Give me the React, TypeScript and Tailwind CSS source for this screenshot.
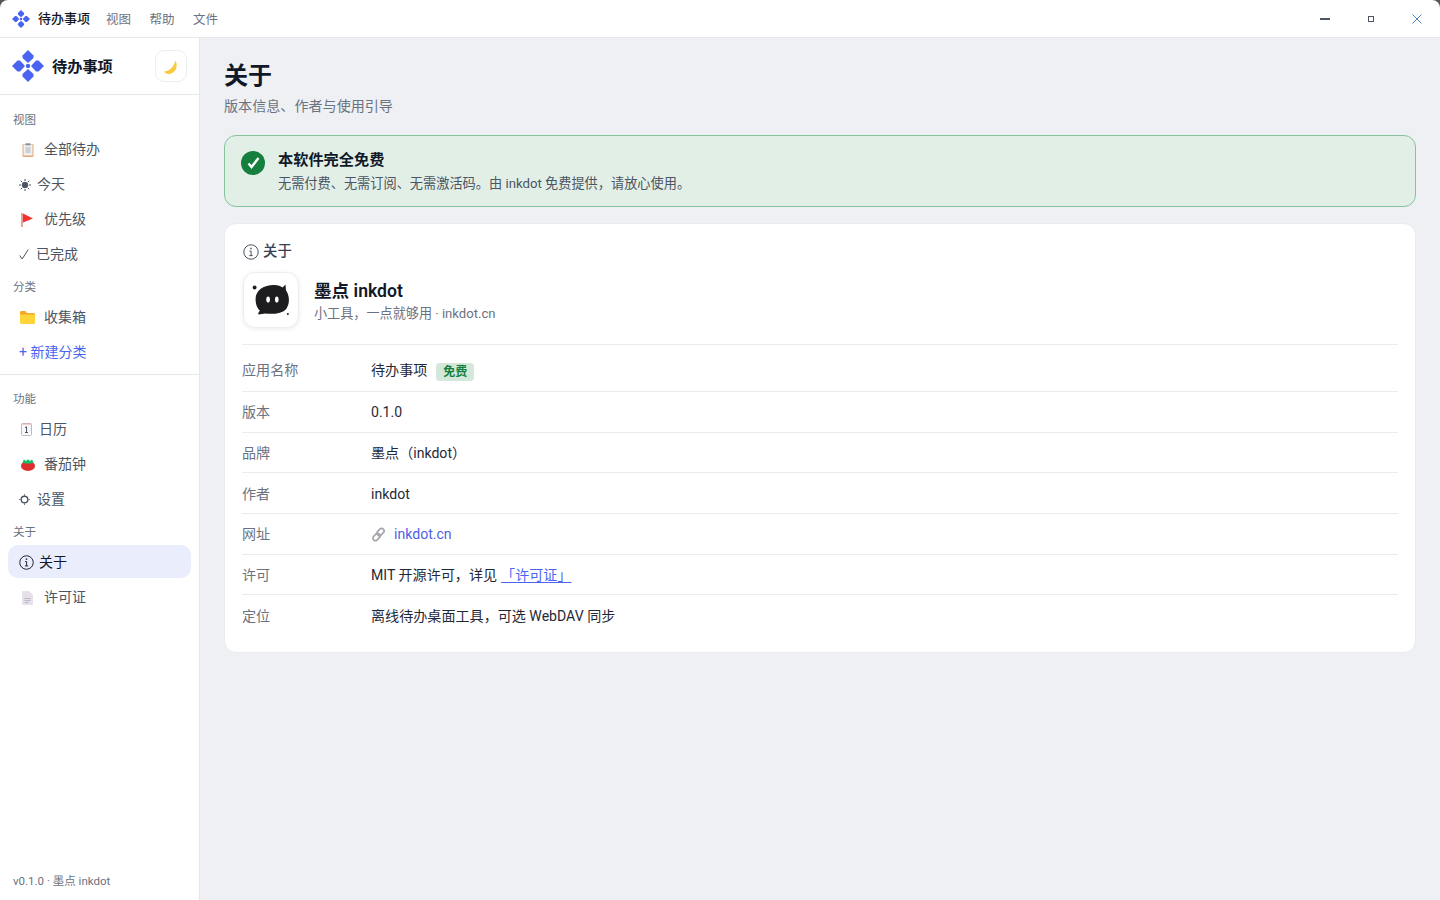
import type { ReactNode } from "react";

const FONT = "font-['Roboto','Noto_Sans_CJK_SC',sans-serif]";

const Logo = ({ size }: { size: number }) => (
  <svg width={size} height={size} viewBox="0 0 32 32" fill="#4a63f0">
    <path d="M16 0l5.500 5.500V8L16 13l-5.500-5V5.500z" />
    <path d="M16 32l5.500-5.500V24L16 19l-5.500 5v2.500z" />
    <path d="M0 16l5.500-5.500H8l5 5.500-5 5.500H5.500z" />
    <path d="M32 16l-5.500-5.500H24l-5 5.500 5 5.500h2.500z" />
    <circle cx="16" cy="16" r="2.200" />
  </svg>
);

const MoonIcon = () => (
  <svg width="16" height="16" viewBox="0 0 16 16" className="mt-[2px]">
    <path d="M12.500 1.500C16 8 11.500 15 5.500 15 3.500 15 2 14 1 12.500 6 12.500 10.500 8.500 12.500 1.500z" fill="#fbc93d" />
  </svg>
);

const ClipboardIcon = () => (
  <svg width="12" height="14" viewBox="0 0 12 14">
    <rect x=".5" y="1" width="11" height="13" rx="1" fill="#e3a878" />
    <rect x="1.500" y="1.500" width="9" height="11" fill="#eef0f2" />
    <rect x="3.500" y=".3" width="5" height="2" fill="#8a8f98" />
    <path d="M3.500 5h5M3.500 7h5M3.500 9h5" stroke="#a9adb5" />
  </svg>
);

const SunIcon = () => (
  <svg width="12" height="12" viewBox="0 0 12 12" stroke="#4b5563" fill="#4b5563" className="shrink-0">
    <circle cx="6" cy="6" r="2.800" />
    <path d="M6 0v2M6 10v2M0 6h2M10 6h2M1.800 1.800l1.400 1.400M8.800 8.800l1.400 1.400M1.800 10.200l1.400-1.400M8.800 3.200l1.400-1.400" fill="none" />
  </svg>
);

const CheckIcon = () => (
  <svg width="10" height="11" viewBox="0 0 10 11" fill="none" stroke="#4b5563" className="shrink-0">
    <path d="M.8 6.500L3.200 10 9.200.5" />
  </svg>
);

const FlagIcon = () => (
  <svg width="13" height="14" viewBox="0 0 13 14">
    <rect x="0" y="0" width="2" height="14" fill="#e8a197" />
    <path d="M2 .5L12 5.500 2 9.500z" fill="#f4312d" />
  </svg>
);

const FolderIcon = () => (
  <svg width="15" height="13" viewBox="0 0 15 13">
    <path d="M0 1.500C0 .7.700 0 1.500 0h3.800l1.500 2H13.500c.8 0 1.500.7 1.500 1.500V4H0z" fill="#f5a623" />
    <path d="M0 3.500h15v8c0 .8-.7 1.500-1.500 1.500h-12C.7 13 0 12.300 0 11.500z" fill="#ffd43b" />
  </svg>
);

const CalendarIcon = () => (
  <svg width="11" height="13" viewBox="0 0 11 13">
    <rect x=".5" y=".5" width="10" height="12" rx="1" fill="#f8f8fa" stroke="#b9bcc6" />
    <path d="M1 1h9" stroke="#e5a8a8" />
    <path d="M4 4.700l1.500-.9V9.500M4 9.500h3" stroke="#4b5563" fill="none" />
  </svg>
);

const TomatoIcon = () => (
  <svg width="14" height="12" viewBox="0 0 14 12">
    <ellipse cx="7" cy="7" rx="7" ry="5" fill="#dd2e2c" />
    <path d="M1.500 3.500L3 .5l2 1.500L7 .3 9 2l2-1.500 1.500 3-3 1H4.500z" fill="#12c26b" />
  </svg>
);

const GearIcon = () => (
  <svg width="11" height="11" viewBox="0 0 11 11" fill="none" stroke="#4b5563" className="shrink-0">
    <circle cx="5.500" cy="5.500" r="3.300" strokeWidth="1.400" />
    <path d="M5.500 0v1.500M5.500 9.500V11M0 5.500h1.500M9.500 5.500H11" strokeWidth=".8" />
  </svg>
);

const InfoIcon = ({ color, size }: { color: string; size: number }) => (
  <svg width={size} height={size} viewBox="0 0 16 16" fill="none" stroke={color} className="shrink-0">
    <circle cx="8" cy="8" r="7.200" />
    <path d="M6.500 7h1.600v4.500M6.300 11.600h3.400" />
    <path d="M8 3.700v1.500" strokeWidth="1.500" />
  </svg>
);

const DocIcon = () => (
  <svg width="11" height="14" viewBox="0 0 11 14">
    <path d="M1 0h6l4 4v9a1 1 0 0 1-1 1H1a1 1 0 0 1-1-1V1a1 1 0 0 1 1-1z" fill="#e5e0ea" />
    <path d="M2.500 7.500h6M2.500 9.500h6M2.500 11.500h4" stroke="#bcb7c4" />
  </svg>
);

const LinkIcon = () => (
  <svg width="15" height="15" viewBox="0 0 15 15" fill="none" stroke="#a3a6ab" strokeWidth="1.700">
    <rect x="7" y="1" width="5" height="8" rx="2.500" transform="rotate(45 9.500 5)" />
    <rect x="3" y="6" width="5" height="8" rx="2.500" transform="rotate(45 5.500 10)" />
  </svg>
);

const InkBlob = () => (
  <svg width="56" height="56" viewBox="0 0 56 56" fill="#1d1d1f">
    <circle cx="11" cy="15" r="2" />
    <circle cx="45.500" cy="42.500" r="1" />
    <path d="M12 27c0-10 10-15 20-14.500 3 0 6 1 8 2.500l3-3 .5 6c3.500 5 4.500 13 .5 19-4 5-14 6-22 5l-7 1c-1-1 1-3 1.500-4-3.500-3-4.500-8-4.500-12z" />
    <ellipse cx="25" cy="27.500" rx="1.900" ry="3.200" fill="#fff" />
    <ellipse cx="34" cy="27.500" rx="1.900" ry="3.200" fill="#fff" />
  </svg>
);

const NavLabel = ({ children, tight }: { children: ReactNode; tight?: boolean }) => (
  <div className={`px-[13px] text-[11.500px] leading-[30px] text-[#6b7280] ${tight ? "h-[27px]" : "h-[28px]"}`}>
    {children}
  </div>
);

const NavItem = ({ icon, label, box, active }: { icon: ReactNode; label: string; box: string; active?: boolean }) => (
  <div
    className={`mx-2 mb-[2px] flex h-[33px] items-center rounded-[10px] pt-[2px] pl-[11px] text-[14px] ${
      active ? "bg-[#e9edfc] text-[#111827]" : "text-[#4b5563]"
    }`}
  >
    <span className={`flex justify-center ${box}`}>{icon}</span>
    <span>{label}</span>
  </div>
);

const InfoRow = ({ label, children, first }: { label: string; children: ReactNode; first?: boolean }) => (
  <div className={`flex items-center border-t border-[#e9ebef] ${first ? "h-[47px] pt-[6px]" : "h-[40.700px] pt-[2px]"}`}>
    <div className="w-[129px] text-[14.080px] text-[#6b7280]">{label}</div>
    <div className="flex items-center text-[14.080px] text-[#1f2937]">{children}</div>
  </div>
);

export default function App() {
  return (
    <div className="h-[900px] w-[1440px] overflow-hidden bg-[#555]">
      <div className={`${FONT} flex h-[900px] w-[1440px] flex-col overflow-hidden rounded-t-[8px] bg-white`}>
        {/* Title bar */}
        <header className="flex h-[38px] shrink-0 items-center border-b border-[#e5e7eb] pl-3">
          <Logo size={18} />
          <span className="mt-px ml-[8px] text-[13px] font-medium text-[#111827]">待办事项</span>
          <nav className="mt-[3px] ml-4 flex gap-[18.500px] text-[12.500px] text-[#6b7280]">
            <span>视图</span>
            <span>帮助</span>
            <span>文件</span>
          </nav>
          <div className="ml-auto flex items-center">
            <svg width="10" height="2" viewBox="0 0 10 2" className="mr-[38px]">
              <rect width="10" height="2" fill="#4b5563" />
            </svg>
            <svg width="6" height="6" viewBox="0 0 6 6" className="mr-[38px]">
              <rect x=".5" y=".5" width="5" height="5" fill="none" stroke="#4b5563" />
            </svg>
            <svg width="10" height="10" viewBox="0 0 10 10" className="mr-[18px]">
              <path d="M.5.500l9 9M9.500.500l-9 9" stroke="#4b83c4" />
            </svg>
          </div>
        </header>

        <div className="flex min-h-0 flex-1">
          {/* Sidebar */}
          <aside className="flex w-[200px] shrink-0 flex-col border-r border-[#e5e7eb] bg-white">
            <div className="flex h-[57px] shrink-0 items-center border-b border-[#e5e7eb] pr-3 pl-3">
              <Logo size={32} />
              <span className="mt-[2px] ml-2 text-[15.200px] font-semibold text-[#111827]">待办事项</span>
              <div className="ml-auto flex h-[32px] w-[32px] items-center justify-center rounded-[9px] border border-[#eceef1]">
                <MoonIcon />
              </div>
            </div>

            <div className="pt-[10px]">
              <NavLabel tight>视图</NavLabel>
              <NavItem icon={<ClipboardIcon />} label="全部待办" box="w-[17px] mr-[8px]" />
              <NavItem icon={<SunIcon />} label="今天" box="w-[11px] mr-[7px]" />
              <NavItem icon={<FlagIcon />} label="优先级" box="w-[17px] mr-[8px]" />
              <NavItem icon={<CheckIcon />} label="已完成" box="w-[10px] mr-[7px]" />
              <NavLabel>分类</NavLabel>
              <NavItem icon={<FolderIcon />} label="收集箱" box="w-[17px] mr-[8px]" />
              <div className="mx-2 flex h-[33px] items-center pt-[2px] pl-[11px] text-[14px] text-[#4a63f0]">+ 新建分类</div>
            </div>

            <div className="mt-[6px] border-t border-[#e5e7eb] pt-[9px]">
              <NavLabel>功能</NavLabel>
              <NavItem icon={<CalendarIcon />} label="日历" box="w-[14px] mr-[6px]" />
              <NavItem icon={<TomatoIcon />} label="番茄钟" box="w-[17px] mr-[8px]" />
              <NavItem icon={<GearIcon />} label="设置" box="w-[10px] mr-[8px]" />
              <NavLabel>关于</NavLabel>
              <NavItem icon={<InfoIcon color="#111827" size={15} />} label="关于" box="w-[15px] mr-[5px]" active />
              <NavItem icon={<DocIcon />} label="许可证" box="w-[17px] mr-[8px]" />
            </div>

            <div className="mt-auto px-[13px] pb-[10px] text-[11.500px] text-[#6b7280]">v0.1.0 · 墨点 inkdot</div>
          </aside>

          {/* Main */}
          <main className="flex-1 bg-[#eef0f4] px-6 pt-[20px]">
            <h1 className="text-[24px] leading-[36px] font-bold text-[#111827]">关于</h1>
            <p className="mt-[2px] text-[14.080px] leading-[21px] text-[#6b7280]">版本信息、作者与使用引导</p>

            <div className="mt-[18px] flex h-[72px] items-start rounded-[12px] border border-[#86c29b] bg-[#e2efe7] pt-[15px] pl-4">
              <div className="flex h-[24px] w-[24px] items-center justify-center rounded-full bg-[#15803d]">
                <svg width="13" height="12" viewBox="0 0 13 12" fill="none" stroke="#fff" strokeWidth="2.400">
                  <path d="M1.500 6.500l3 3.500L11.500 1" />
                </svg>
              </div>
              <div className="ml-[13px] -mt-[2px]">
                <div className="text-[15.200px] leading-[22px] font-semibold text-[#111827]">本软件完全免费</div>
                <div className="mt-[3px] text-[13.200px] leading-[20px] text-[#4b5563]">
                  无需付费、无需订阅、无需激活码。由 inkdot 免费提供，请放心使用。
                </div>
              </div>
            </div>

            <section className="mt-4 h-[430px] rounded-[12px] border border-[#e9ebef] bg-white px-[17px] pt-[18px]">
              <div className="ml-px flex h-[20px] items-center text-[14.400px] font-medium text-[#374151]">
                <InfoIcon color="#4b5563" size={16} />
                <span className="ml-[4px]">关于</span>
              </div>
              <div className="mt-[10px] ml-px flex items-center">
                <div className="flex h-[56px] w-[56px] items-center justify-center rounded-[12px] border border-[#eceef1] bg-white shadow-[0_1px_4px_rgba(0,0,0,0.08)]">
                  <InkBlob />
                </div>
                <div className="ml-[15px] pt-[2px]">
                  <div className="text-[17.600px] leading-[24px] font-semibold text-[#111827]">墨点 inkdot</div>
                  <div className="mt-[1px] text-[13.120px] leading-[20px] text-[#6b7280]">小工具，一点就够用 · inkdot.cn</div>
                </div>
              </div>

              <div className="mt-[16px]">
                <InfoRow label="应用名称" first>
                  待办事项
                  <span className="mt-[2px] ml-[9px] rounded-[4px] bg-[#d3e8da] px-[7px] text-[12px] leading-[18px] font-semibold text-[#15803d]">免费</span>
                </InfoRow>
                <InfoRow label="版本">0.1.0</InfoRow>
                <InfoRow label="品牌">墨点（inkdot）</InfoRow>
                <InfoRow label="作者">inkdot</InfoRow>
                <InfoRow label="网址">
                  <LinkIcon />
                  <span className="ml-2 text-[#4f5fe8]">inkdot.cn</span>
                </InfoRow>
                <InfoRow label="许可">
                  MIT 开源许可，详见
                  <span className="ml-1 text-[#4a63f0] underline underline-offset-2">「许可证」</span>
                </InfoRow>
                <InfoRow label="定位">离线待办桌面工具，可选 WebDAV 同步</InfoRow>
              </div>
            </section>
          </main>
        </div>
      </div>
    </div>
  );
}
